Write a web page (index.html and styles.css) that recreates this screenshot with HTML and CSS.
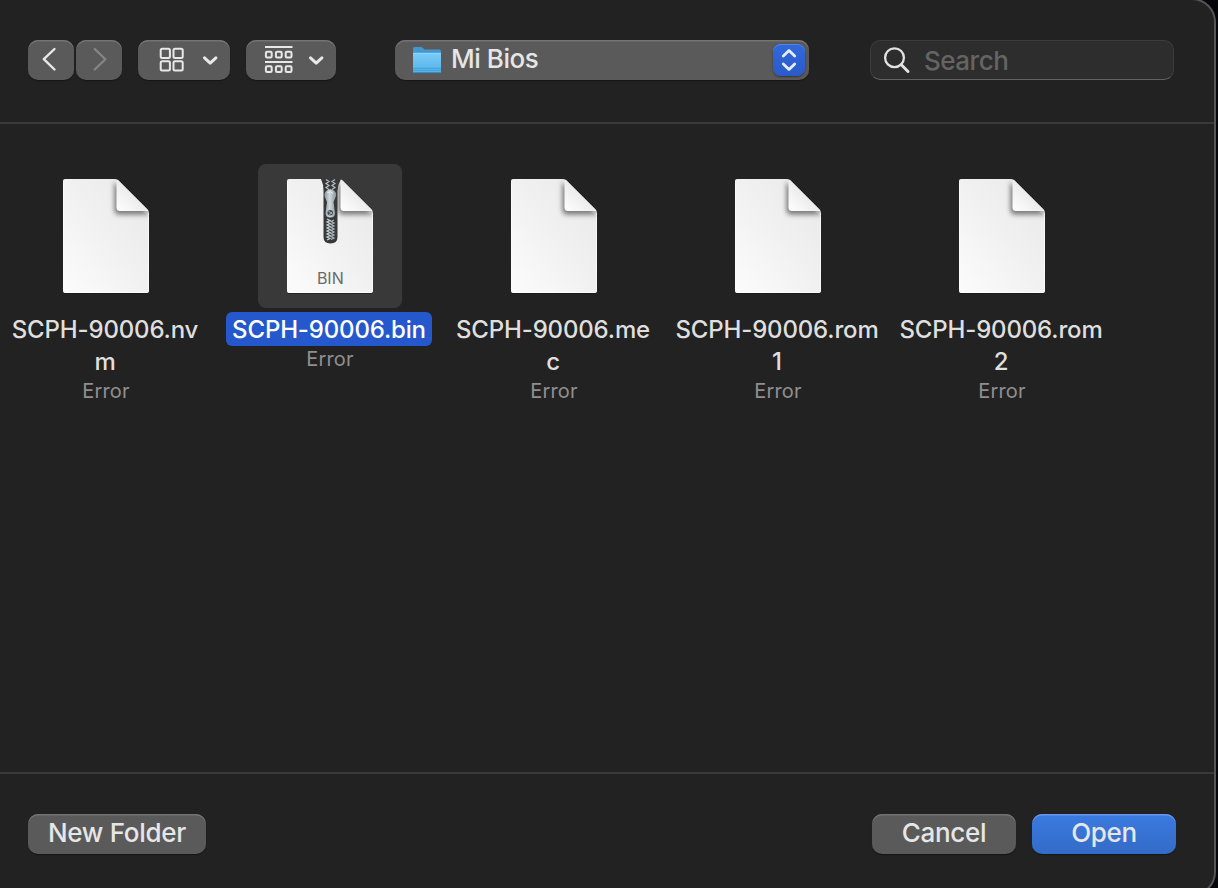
FILE: index.html
```html
<!DOCTYPE html>
<html lang="en">
<head>
<meta charset="utf-8">
<title>Open</title>
<link rel="stylesheet" href="styles.css">
</head>
<body>
<svg class="defs" width="0" height="0" aria-hidden="true">
  <defs>
    <linearGradient id="paper" x1="1" y1="0" x2="0" y2="1">
      <stop offset="0" stop-color="#e8e8e8"/><stop offset=".5" stop-color="#f1f1f1"/><stop offset="1" stop-color="#fcfcfc"/>
    </linearGradient>
    <linearGradient id="fold" x1="0" y1="1" x2=".55" y2=".45">
      <stop offset="0" stop-color="#fff"/><stop offset="1" stop-color="#e9e9e9"/>
    </linearGradient>
    <filter id="soft" x="-50%" y="-50%" width="200%" height="200%"><feGaussianBlur stdDeviation="2.6"/></filter>
    <clipPath id="sheet"><path d="M31 15H81Q83 15 84.500 16.500L113.500 45.500Q115 47 115 49V127a2 2 0 0 1-2 2H31a2 2 0 0 1-2-2V17a2 2 0 0 1 2-2Z"/></clipPath>
    <symbol id="doc" viewBox="0 0 144 144">
      <path d="M31 16H82.500L115 48.500V128a2 2 0 0 1-2 2H31a2 2 0 0 1-2-2Z" fill="#111" opacity=".5"/>
      <path d="M31 15H81Q83 15 84.500 16.500L113.500 45.500Q115 47 115 49V127a2 2 0 0 1-2 2H31a2 2 0 0 1-2-2V17a2 2 0 0 1 2-2Z" fill="url(#paper)"/>
      <g clip-path="url(#sheet)"><path d="M80.500 18V46q0 4.500 4.500 4.500H116Z" fill="#444" opacity=".7" filter="url(#soft)"/>
      <path d="M82.500 14L116 47H86q-3.500 0-3.500-3.500Z" fill="url(#fold)"/></g>
      <path d="M29.500 17.500V126.500q0 2 2 2H112.500q2 0 2-2V49" fill="none" stroke="#fff" stroke-opacity=".6"/>
    </symbol>
    <linearGradient id="metal"><stop offset="0" stop-color="#8d979c"/><stop offset=".45" stop-color="#d0d9dd"/><stop offset="1" stop-color="#87949b"/></linearGradient>
    <linearGradient id="folder" x1="0" y1="0" x2="0" y2="1"><stop offset="0" stop-color="#7bcdf8"/><stop offset="1" stop-color="#53b1e8"/></linearGradient>
  </defs>
</svg>

<main class="dialog">
  <header class="toolbar">
    <div class="nav">
      <button class="btn nav-btn" aria-label="Back"><svg width="46" height="40" viewBox="0 0 46 40"><path d="M26.500 9L15.800 19.200L26.500 29.500" fill="none" stroke="#e8e8e8" stroke-width="2.400" stroke-linecap="round" stroke-linejoin="round"/></svg></button>
      <button class="btn nav-btn" aria-label="Forward"><svg width="46" height="40" viewBox="0 0 46 40"><path d="M18.700 9L29.400 19.200L18.700 29.500" fill="none" stroke="#868686" stroke-width="2.200" stroke-linecap="round" stroke-linejoin="round"/></svg></button>
    </div>
    <button class="btn view-btn" aria-label="Icon view"><svg width="92" height="40" viewBox="0 0 92 40" fill="none" stroke="#e8e8e8">
      <g stroke-width="2"><rect x="22.700" y="8.700" width="9.200" height="9.200" rx="1.500"/><rect x="35.500" y="8.700" width="9.200" height="9.200" rx="1.500"/><rect x="22.700" y="21.200" width="9.200" height="9.200" rx="1.500"/><rect x="35.500" y="21.200" width="9.200" height="9.200" rx="1.500"/></g>
      <path d="M66.500 17.800L72.200 23.200L77.900 17.800" stroke-width="3" stroke-linecap="round" stroke-linejoin="round"/></svg></button>
    <button class="btn group-btn" aria-label="Group by"><svg width="90" height="40" viewBox="0 0 90 40" fill="none" stroke="#e8e8e8">
      <path d="M19 7H46.500M19 22H46.500" stroke-width="2"/>
      <g stroke-width="2"><rect x="19.900" y="11.700" width="5.800" height="5.800" rx="1.200"/><rect x="29.900" y="11.700" width="5.800" height="5.800" rx="1.200"/><rect x="39.700" y="11.700" width="5.800" height="5.800" rx="1.200"/><rect x="19.900" y="26.200" width="5.800" height="5.800" rx="1.200"/><rect x="29.900" y="26.200" width="5.800" height="5.800" rx="1.200"/><rect x="39.700" y="26.200" width="5.800" height="5.800" rx="1.200"/></g>
      <path d="M64.500 17.800L70.200 23.200L75.900 17.800" stroke-width="3" stroke-linecap="round" stroke-linejoin="round"/></svg></button>
    <button class="btn location">
      <svg class="folder" width="30" height="28" viewBox="0 0 30 28"><path d="M1 24V2.500Q1 1 2.500 1H9Q10 1 11 2L12.500 3.500H27.500Q29 3.500 29 5V24Z" fill="#4498cf"/><path d="M1 8Q1 6.800 2.200 6.800H27.800Q29 6.800 29 8V25.500Q29 27 27.500 27H2.500Q1 27 1 25.500Z" fill="url(#folder)"/><path d="M1 7.500H29" stroke="#91d9fb" stroke-width=".8"/><path d="M1 22.300H29M1 24.300H29" stroke="#3f9bd3" stroke-width=".8"/><path d="M1.500 26.500H28.500" stroke="#358cc6"/></svg>
      <span class="location-name">Mi Bios</span>
      <span class="stepper"><svg width="32" height="32" viewBox="0 0 32 32" fill="none" stroke="#e6ebf8" stroke-width="2.800" stroke-linecap="round" stroke-linejoin="round"><path d="M10.300 12L16 6.400L21.700 12M10.300 20L16 25.600L21.700 20"/></svg></span>
    </button>
    <div class="search">
      <svg width="28" height="28" viewBox="0 0 28 28" fill="none" stroke="#e2e2e2"><circle cx="11.500" cy="11.700" r="9.400" stroke-width="2.300"/><path d="M18.300 18.700L25 25.500" stroke-width="3" stroke-linecap="round"/></svg>
      <span>Search</span>
    </div>
  </header>

  <section class="files">
    <div class="file"><div class="tile"><svg width="144" height="144"><use href="#doc"/></svg></div>
      <div class="name"><span>SCPH-90006.nv</span><br>m</div><div class="info">Error</div></div>
    <div class="file selected"><div class="tile"><svg width="144" height="144" viewBox="0 0 144 144"><use href="#doc" width="144" height="144"/>
        <path d="M63 15H83Q80 20 79.500 27V73Q79.500 79.500 72.500 79.500Q65.500 79.500 65.500 73V27Q65.500 20 63 15Z" fill="#37383a"/>
        <path d="M68 15.500L71 17.500L68 19.500L71 21.500L68 23.500L71 25.500M77 15.500L74 17.500L77 19.500L74 21.500L77 23.500L74 25.500" fill="none" stroke="#b4bec2" stroke-width="1.200"/>
        <path d="M69 55L72 56.500L69 58L72 59.500L69 61L72 62.500L69 64L72 65.500L69 67L72 68.500L69 70L72 71.500L69 73L72 74.500L69 76" stroke="#c4ced1" stroke-width="1.300" fill="none"/>
        <path d="M76 56L73 57.500L76 59L73 60.500L76 62L73 63.500L76 65L73 66.500L76 68L73 69.500L76 71L73 72.500L76 74L73 75.500" stroke="#a7b5ba" stroke-width="1.300" fill="none"/>
        <path d="M69.500 26Q72 24.500 75 26Q79 28 78 32L75.500 38L77 49Q77 53.500 72.300 53.500Q67.500 53.500 67.500 49L69 38L66.500 32Q66 28 69.500 26Z" fill="url(#metal)"/>
        <path d="M69.500 28.500Q73 26.500 75 29.500" stroke="#e9eff1" fill="none"/>
        <circle cx="72.200" cy="48.800" r="2.700" fill="#44494b"/><path d="M70.500 47.500L74 49L71 50.500" stroke="#bac7cc" stroke-width=".9" fill="none"/>
        <text class="ext" x="72.300" y="120" text-anchor="middle">BIN</text></svg></div>
      <div class="name"><span>SCPH-90006.bin</span></div><div class="info">Error</div></div>
    <div class="file"><div class="tile"><svg width="144" height="144"><use href="#doc"/></svg></div>
      <div class="name"><span>SCPH-90006.me</span><br>c</div><div class="info">Error</div></div>
    <div class="file"><div class="tile"><svg width="144" height="144"><use href="#doc"/></svg></div>
      <div class="name"><span>SCPH-90006.rom</span><br>1</div><div class="info">Error</div></div>
    <div class="file"><div class="tile"><svg width="144" height="144"><use href="#doc"/></svg></div>
      <div class="name"><span>SCPH-90006.rom</span><br>2</div><div class="info">Error</div></div>
  </section>

  <footer class="actions">
    <button class="btn new-folder">New Folder</button>
    <button class="btn action">Cancel</button>
    <button class="btn action primary">Open</button>
  </footer>
</main>
</body>
</html>
```
FILE: styles.css
```css
* { box-sizing: border-box; }
html, body { height: 100%; }
body {
  margin: 0;
  overflow: hidden;
  background: #05060a;
  font-family: Inter, "Liberation Sans", sans-serif;
  color: #dfdfdf;
}
svg { display: block; flex: none; }
.defs { height: 0; }
.dialog {
  display: flex;
  flex-direction: column;
  width: 1216px;
  height: 898px;
  margin-top: -2px;
  background: #222;
  border: 2px solid #545454;
  border-left: 0;
  border-radius: 0 24px 24px 0;
}
.toolbar {
  display: flex;
  align-items: flex-start;
  height: 124px;
  padding: 40px 40px 0 28px;
  border-bottom: 2px solid #3a3a3a;
}
.btn {
  display: flex;
  align-items: center;
  justify-content: center;
  height: 40px;
  padding: 0;
  border: 0;
  border-radius: 10px;
  background: #5a5a5a;
  box-shadow: inset 0 1.500px 0 #737373, 0 1px 1px #161616;
  color: #e6e6e6;
  font: 450 26px/38px Inter, "Liberation Sans", sans-serif;
}
.nav { display: flex; gap: 2px; margin-right: 16px; }
.nav-btn { width: 46px; }
.view-btn { width: 92px; margin-right: 16px; }
.group-btn { width: 90px; margin-right: 59px; }
.location { width: 414px; margin-right: 61px; padding: 0 4px 0 17px; justify-content: flex-start; }
.folder { margin-right: 9px; }
.location-name { flex: 1; text-align: left; letter-spacing: -.45px; padding-bottom: 2px; }
.stepper {
  width: 32px;
  height: 32px;
  border-radius: 8px;
  background: linear-gradient(#3068dc, #2a5bc8);
  box-shadow: inset 0 1px 0 #5683e4, 0 1px 2px #333;
}
.search {
  display: flex;
  align-items: center;
  gap: 13px;
  width: 304px;
  height: 40px;
  padding-left: 12px;
  border: 1px solid #3c3c3c;
  border-bottom-color: #626262;
  border-radius: 10px;
  background: #2d2d2d;
  color: #646464;
  font-size: 26px;
  font-weight: 450;
  letter-spacing: -.5px;
}
.files {
  display: grid;
  grid-template-columns: repeat(5, 224px);
  align-content: start;
  height: 648px;
  margin-left: -6px;
  padding-top: 40px;
}
.file { display: flex; flex-direction: column; align-items: center; }
.tile { width: 144px; height: 144px; margin-bottom: 4px; border-radius: 8px; }
.selected .tile { background: #393939; }
.name {
  padding: 2px 6px 0;
  margin-left: -2px;
  border-radius: 6px;
  font-size: 24px;
  font-weight: 500;
  line-height: 32px;
  letter-spacing: -.16px;
  text-align: center;
  white-space: nowrap;
}
.selected .name { background: #2458cc; color: #fff; }
.info { margin-top: -1px; color: #8f8f8f; font-size: 20px; line-height: 28px; letter-spacing: .2px; }
.ext { font-size: 16px; fill: #6b6b6b; }
.actions {
  display: flex;
  gap: 16px;
  height: 122px;
  padding: 40px 38px 0 28px;
  border-top: 2px solid #3a3a3a;
}
.actions .btn { padding-bottom: 2px; letter-spacing: -.3px; }
.new-folder { width: 178px; margin-right: auto; }
.action { width: 144px; }
.actions .primary {
  background: linear-gradient(#3b7ae0, #336bc7);
  box-shadow: inset 0 1.500px 0 #6697e8, 0 1px 1px #161616;
}
```
